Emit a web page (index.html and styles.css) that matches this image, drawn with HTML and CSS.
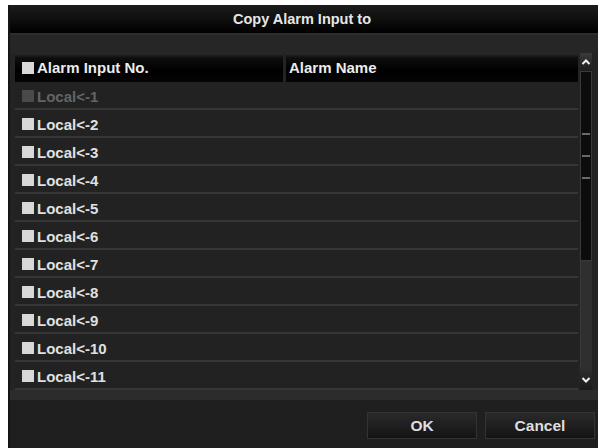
FILE: index.html
```html
<!DOCTYPE html>
<html>
<head>
<meta charset="utf-8">
<link rel="stylesheet" href="styles.css">
</head>
<body>
<div class="dialog">
  <div class="titlebar">Copy Alarm Input to</div>
  <div class="subbar"></div>
  <div class="listwrap">
    <div class="table">
      <div class="thead">
        <div class="th th-no"><span class="cb"></span>Alarm Input No.</div>
        <div class="th th-name">Alarm Name</div>
      </div>
      <div class="row disabled"><span class="cb"></span>Local&lt;-1</div>
      <div class="row"><span class="cb"></span>Local&lt;-2</div>
      <div class="row"><span class="cb"></span>Local&lt;-3</div>
      <div class="row"><span class="cb"></span>Local&lt;-4</div>
      <div class="row"><span class="cb"></span>Local&lt;-5</div>
      <div class="row"><span class="cb"></span>Local&lt;-6</div>
      <div class="row"><span class="cb"></span>Local&lt;-7</div>
      <div class="row"><span class="cb"></span>Local&lt;-8</div>
      <div class="row"><span class="cb"></span>Local&lt;-9</div>
      <div class="row"><span class="cb"></span>Local&lt;-10</div>
      <div class="row"><span class="cb"></span>Local&lt;-11</div>
    </div>
    <div class="scroll">
      <div class="sbtn up"><svg width="10" height="8" viewBox="0 0 10 8"><path d="M1.5 6 L5 2.5 L8.5 6" fill="none" stroke="#f0f0f0" stroke-width="2"/></svg></div>
      <div class="thumb"><i></i><i></i><i></i></div>
      <div class="track"></div>
      <div class="sbtn down"><svg width="10" height="8" viewBox="0 0 10 8"><path d="M1.5 2 L5 5.5 L8.5 2" fill="none" stroke="#f0f0f0" stroke-width="2"/></svg></div>
    </div>
  </div>
  <div class="listfoot"></div>
  <div class="footer">
    <button class="btn">OK</button>
    <button class="btn">Cancel</button>
  </div>
</div>
</body>
</html>
```

FILE: styles.css
```css
html, body {
  margin: 0;
  padding: 0;
  background: #ffffff;
}
body {
  font-family: "Liberation Sans", Arial, sans-serif;
  font-weight: bold;
}
.dialog {
  margin: 5px 0 0 8px;
  width: 590px;
  height: 443px;
  background: #232323;
  border-left: 2px solid #151515;
  box-sizing: border-box;
  display: flex;
  flex-direction: column;
}
.titlebar {
  height: 28px;
  flex: none;
  background: linear-gradient(#1c1c1c, #0c0c0c 60%, #000);
  color: #e6e6e6;
  font-size: 14.5px;
  display: flex;
  align-items: center;
  justify-content: center;
  padding-right: 4px;
}
.subbar {
  height: 20px;
  flex: none;
  background: #262626;
  border-top: 2px solid #2e2e2e;
  box-sizing: border-box;
}
.listwrap {
  flex: none;
  display: flex;
  gap: 2px;
  padding: 0 6px 0 5px;
}
.table {
  width: 563px;
  display: flex;
  flex-direction: column;
}
.thead {
  height: 29px;
  display: flex;
  gap: 3px;
}
.th {
  background: linear-gradient(#2c2c2c 0, #0e0e0e 5px, #000 60%, #050505);
  color: #ececec;
  font-size: 15px;
  display: flex;
  align-items: center;
}
.th-no {
  width: 268px;
  padding-left: 7px;
  box-sizing: border-box;
}
.th-name {
  flex: 1;
  padding-left: 3px;
}
.cb {
  width: 12px;
  height: 12px;
  background: #d8d8d8;
  margin-right: 3px;
  flex: none;
}
.row {
  height: 28px;
  box-sizing: border-box;
  border-bottom: 2px solid #363636;
  background: #222222;
  color: #e0e0e0;
  font-size: 15px;
  display: flex;
  align-items: center;
  padding-left: 7px;
  padding-top: 2px;
}
.row.disabled {
  color: #646464;
}
.row.disabled .cb {
  background: #4a4a4a;
}
.scroll {
  width: 12px;
  display: flex;
  flex-direction: column;
  background: #2e2e2e;
}
.sbtn {
  height: 18px;
  flex: none;
  background: linear-gradient(#3a3a3a, #1c1c1c);
  display: flex;
  align-items: center;
  justify-content: center;
}
.sbtn.down {
  height: 21px;
  background: linear-gradient(#2e2e2e, #1a1a1a);
}
.thumb {
  height: 190px;
  flex: none;
  background: #0c0c0c;
  border: 1px solid #3a3a3a;
  box-sizing: border-box;
  display: flex;
  flex-direction: column;
  align-items: center;
  padding-top: 61px;
  gap: 20px;
}
.thumb i {
  display: block;
  width: 8px;
  height: 2px;
  background: #6a6a6a;
}
.track {
  flex: 1;
  background: #2f2f2f;
  border-left: 1px solid #3a3a3a;
}
.listfoot {
  height: 10px;
  flex: none;
  background: #2c2c2c;
}
.footer {
  flex: 1;
  background: #1f1f1f;
  display: flex;
  justify-content: flex-end;
  align-items: flex-start;
  gap: 8px;
  padding: 12px 3px 0 0;
}
.btn {
  width: 110px;
  height: 27px;
  background: linear-gradient(#2a2a2a, #141414);
  border: 1px solid #333333;
  color: #dedede;
  font-family: "Liberation Sans", Arial, sans-serif;
  font-weight: bold;
  font-size: 15.5px;
  padding: 0;
}
```
